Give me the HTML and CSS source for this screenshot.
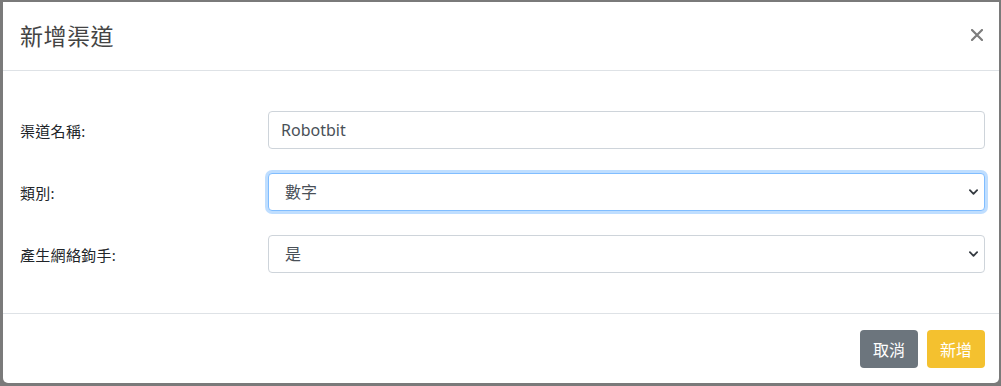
FILE: index.html
```html
<!DOCTYPE html>
<html lang="zh-Hant">
  <head>
    <meta charset="UTF-8" />
    <meta name="viewport" content="width=device-width, initial-scale=1.0" />
    <title>新增渠道</title>
    <link rel="stylesheet" href="styles.css">
  </head>
  <body>
    <div class="modal">
      <!-- ヘッダー -->
      <div class="modal-header">
        <h5 class="modal-title">新增渠道</h5>
        <button class="close" type="button" aria-label="Close">
          <svg width="12" height="12" viewBox="0 0 12 12">
            <path d="M1 1 L11 11 M11 1 L1 11" stroke="#7d7d7d" stroke-width="2.2" stroke-linecap="round" />
          </svg>
        </button>
      </div>

      <div class="modal-body">
        <div class="form-row">
          <label class="form-label">渠道名稱:</label>
          <input class="form-control" type="text" value="Robotbit" />
        </div>
        <div class="form-row">
          <label class="form-label">類別:</label>
          <select class="form-select focused">
            <option>數字</option>
          </select>
        </div>
        <div class="form-row">
          <label class="form-label">產生網絡鉤手:</label>
          <select class="form-select">
            <option>是</option>
          </select>
        </div>
      </div>

      <!-- フッター -->
      <div class="modal-footer">
        <button class="btn btn-secondary" type="button">取消</button>
        <button class="btn btn-warning" type="button">新增</button>
      </div>
    </div>
  </body>
</html>
```

FILE: styles.css
```css
body {
  margin: 0;
  padding: 2px 2px 0 3px;
  height: 386px;
  box-sizing: border-box;
  background-color: #7a7a7a;
  font-family: "Noto Sans", "Noto Sans CJK TC", sans-serif;
  color: #212529;
  overflow: hidden;
}
.modal {
  background-color: #fff;
  height: 381px;
  border-radius: 0 0 5px 5px;
  display: flex;
  flex-direction: column;
}
.modal-header {
  height: 68px;
  border-bottom: 1px solid #dee2e6;
  display: flex;
  align-items: center;
  justify-content: space-between;
  padding: 1px 16px 0 17px;
}
.modal-title {
  margin: 0;
  font-size: 23px;
  font-weight: 400;
  color: #444;
  letter-spacing: 0.5px;
  line-height: 1;
}
.close {
  border: none;
  background: none;
  padding: 0;
  margin-top: -4px;
  width: 12px;
  height: 12px;
  display: flex;
}
.modal-body {
  padding: 40px 14px 40px 16px;
  display: flex;
  flex-direction: column;
  gap: 24px;
}
.form-row {
  display: grid;
  grid-template-columns: 249px 1fr;
  align-items: center;
}
.form-label {
  font-size: 15px;
  padding-left: 1px;
  letter-spacing: 0.3px;
}
.form-control,
.form-select {
  height: 38px;
  box-sizing: border-box;
  border: 1px solid #ced4da;
  border-radius: 4px;
  font-family: inherit;
  font-size: 16px;
  color: #495057;
  background-color: #fff;
  padding: 0 12px;
  outline: none;
}
.form-select {
  appearance: none;
  padding-left: 16px;
  background-image: url("data:image/svg+xml,%3csvg xmlns='http://www.w3.org/2000/svg' viewBox='0 0 10 6'%3e%3cpath d='M1 1l4 4 4-4' fill='none' stroke='%23343a40' stroke-width='2' stroke-linecap='round' stroke-linejoin='round'/%3e%3c/svg%3e");
  background-repeat: no-repeat;
  background-position: right 6px center;
  background-size: 9px 6px;
}
.focused {
  border-color: #80bdff;
  box-shadow: 0 0 0 3px rgba(0, 123, 255, 0.25);
}
.modal-footer {
  margin-top: auto;
  border-top: 1px solid #dee2e6;
  padding: 16px 14px 15px 16px;
  display: flex;
  justify-content: flex-end;
  gap: 9px;
}
.btn {
  height: 38px;
  padding: 0 13px;
  border: none;
  border-radius: 4px;
  font-family: inherit;
  font-size: 16px;
  color: #fff;
}
.btn-secondary {
  background-color: #6c757d;
}
.btn-warning {
  background-color: #f4c12f;
}
```
